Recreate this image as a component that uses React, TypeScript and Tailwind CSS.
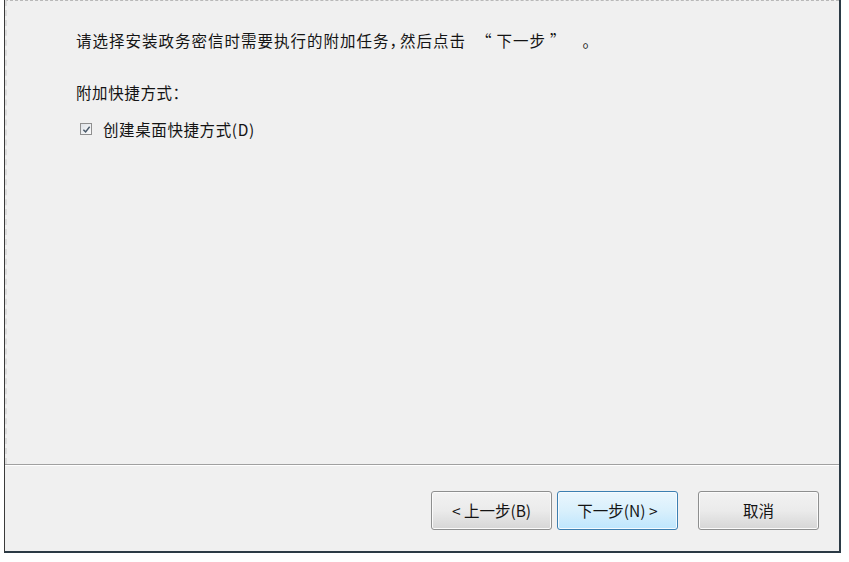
const font = "font-['Microsoft_YaHei','Noto_Sans_CJK_SC',sans-serif]";

const WizButton = ({ label, primary = false }: { label: string; primary?: boolean }) => (
  <button
    className={
      "h-[39px] w-[121px] rounded-[3px] border text-[15.5px] text-[#141414] " +
      (primary
        ? "border-[#3c7fb1] bg-gradient-to-b from-[#eaf6fd] via-[#d9f0fc] to-[#bee6fd] shadow-[inset_0_0_0_1px_#f5fbff]"
        : "border-[#8e8f8f] bg-gradient-to-b from-[#f2f2f2] via-[#ebebeb] to-[#d6d6d6] shadow-[inset_0_0_0_1px_#fbfbfb]")
    }
  >
    {label}
  </button>
);

export default function App() {
  return (
    <div lang="zh-CN" className={"h-[562px] w-[849px] bg-white " + font}>
      <div className="ml-[4px] flex h-[553px] w-[837px] flex-col border-b-2 border-l border-r-2 border-b-[#2b3a45] border-l-[#3a3a3a] border-r-[#2b3a45] bg-[#f0f0f0]">
        <div className="flex-1 border-l-2 border-t border-dashed border-l-[#dcdcdc] border-t-[#b8b8b8] pl-[69px] pt-[29px] text-[15.5px] leading-[20px] text-[#141414]">
          <p className="flex items-center tracking-[1px]">
            <span>请选择安装政务密信时需要执行的附加任务，</span>
            <span className="-ml-[6px]">然后点击</span>
            <span className="ml-[10px]">“</span>
            <span className="ml-[4px]">下一步</span>
            <span className="ml-[4px]">”</span>
            <span className="ml-[16px]">。</span>
          </p>
          <p className="mt-[32px] tracking-[0.6px]">附加快捷方式：</p>
          <label className="mt-[17px] flex items-center gap-[11px] pl-[4px]">
            <span className="flex h-[12px] w-[12px] items-center justify-center border border-[#8f8f8f] bg-gradient-to-br from-[#dfe3e8] to-[#fbfbfb]">
              <svg viewBox="0 0 10 10" className="h-[9px] w-[9px]">
                <path d="M1.5 5.2 L4 7.6 L8.5 2" fill="none" stroke="#4a5a6a" strokeWidth="1.6" />
              </svg>
            </span>
            <span className="tracking-[0.6px]">创建桌面快捷方式(D)</span>
          </label>
        </div>
        <div className="h-[2px] border-t border-[#a0a0a0] bg-white" />
        <div className="flex h-[85px] items-start pl-[426px] pt-[25px]">
          <WizButton label="< 上一步(B)" />
          <div className="ml-[5px]">
            <WizButton label="下一步(N) >" primary />
          </div>
          <div className="ml-[20px]">
            <WizButton label="取消" />
          </div>
        </div>
      </div>
    </div>
  );
}
